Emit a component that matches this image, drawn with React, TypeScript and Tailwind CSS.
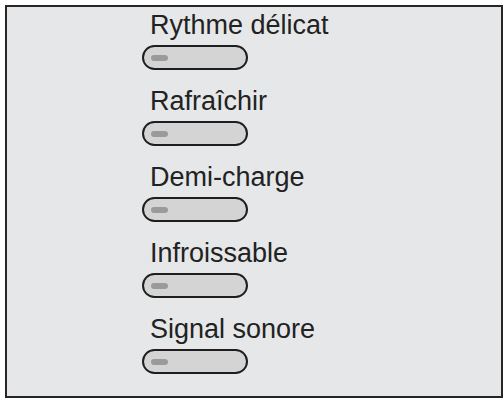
const items = ["Rythme délicat", "Rafraîchir", "Demi-charge", "Infroissable", "Signal sonore"];

export default function App() {
  return (
    <div className="p-[5px] bg-white" style={{ fontFamily: '"Liberation Sans", Arial, sans-serif' }}>
      <div className="w-[498px] h-[393px] border-2 border-[#262626] bg-[#e6e7e8] pl-[135px] pt-[3px]">
        <div className="flex flex-col gap-[16px]">
          {items.map((label) => (
            <div key={label} className="flex flex-col gap-[5px]">
              <div className="pl-[8px] text-[27px] leading-[30px] text-[#222]">{label}</div>
              <div className="w-[106px] h-[25px] rounded-full border-2 border-[#1e1e1e] bg-[#d4d4d4] flex items-center pl-[7px]">
                <div className="w-[17px] h-[6px] rounded-full bg-[#9a9a9a]" />
              </div>
            </div>
          ))}
        </div>
      </div>
    </div>
  );
}
